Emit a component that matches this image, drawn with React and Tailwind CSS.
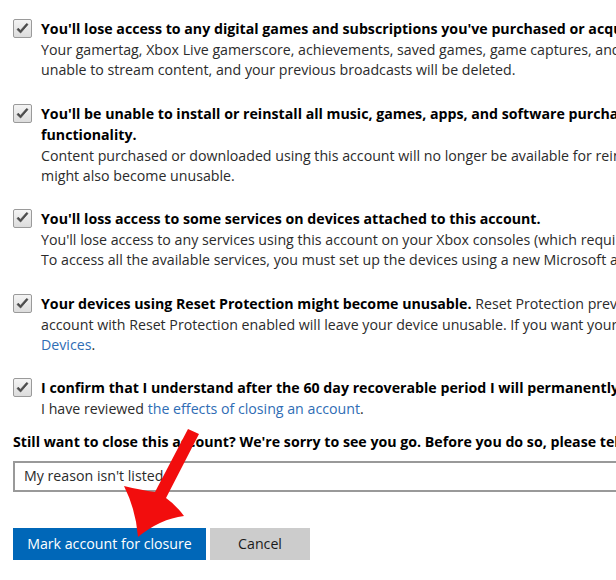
import React from "react";

function Check() {
  return (
    <div className="w-[19px] h-[19px] shrink-0 rounded-[2px] border border-[#9a9a9a] bg-gradient-to-b from-[#f4f4f4] to-[#dcdcdc] flex items-center justify-center">
      <svg width="13" height="12" viewBox="0 0 13 12">
        <path d="M1 6.5 L4.6 10 L12 1.5 L10.6 0.6 L4.5 7.4 L2.3 5.2 Z" fill="#4a4a4a" stroke="#4a4a4a" strokeWidth="0.8" strokeLinejoin="round" />
      </svg>
    </div>
  );
}

function Item({ children, className = "" }) {
  return (
    <div className={"flex gap-[9px] " + className}>
      <Check />
      <div className="flex-1 min-w-0">{children}</div>
    </div>
  );
}

const H = ({ children }) => (
  <div className="whitespace-nowrap font-bold text-black">{children}</div>
);
const L = ({ children }) => (
  <div className="whitespace-nowrap text-[#2b2b2b]">{children}</div>
);
const A = ({ children }) => <span className="text-[#2f6db5]">{children}</span>;

export default function App() {
  return (
    <div
      className="relative w-[616px] h-[580px] overflow-hidden bg-white text-[14.2px] leading-[20.7px]"
      style={{ fontFamily: '"Open Sans", "Noto Sans", sans-serif' }}
    >
      <div className="pl-[13px] pt-[19px] flex flex-col">
        <Item>
          <H>You'll lose access to any digital games and subscriptions you've purchased or acquired.</H>
          <L>Your gamertag, Xbox Live gamerscore, achievements, saved games, game captures, and friends will be deleted. You'll be</L>
          <L>unable to stream content, and your previous broadcasts will be deleted.</L>
        </Item>
        <Item className="mt-[23px]">
          <H>You'll be unable to install or reinstall all music, games, apps, and software purchased with this account and they might lose</H>
          <H>functionality.</H>
          <L>Content purchased or downloaded using this account will no longer be available for reinstallation. Software or apps</L>
          <L>might also become unusable.</L>
        </Item>
        <Item className="mt-[22px]">
          <H>You'll loss access to some services on devices attached to this account.</H>
          <L>You'll lose access to any services using this account on your Xbox consoles (which require a Microsoft account).</L>
          <L>To access all the available services, you must set up the devices using a new Microsoft account.</L>
        </Item>
        <Item className="mt-[23px]">
          <div className="whitespace-nowrap text-[#2b2b2b]">
            <span className="font-bold text-black">Your devices using Reset Protection might become unusable.</span> Reset Protection prevents others from using your device.
          </div>
          <L>account with Reset Protection enabled will leave your device unusable. If you want your device to be usable, turn off</L>
          <L>
            <A>Devices</A>.
          </L>
        </Item>
        <Item className="mt-[22px]">
          <H>I confirm that I understand after the 60 day recoverable period I will permanently lose access to this account.</H>
          <L>
            I have reviewed <A>the effects of closing an account</A>.
          </L>
        </Item>
        <div className="mt-[12px] whitespace-nowrap font-bold text-black">
          Still want to close this account? We're sorry to see you go. Before you do so, please tell us why you're leaving.
        </div>
        <div className="mt-[9px] w-[700px] h-[31px] border-2 border-[#999999] flex items-center pl-[9px] text-[#2b2b2b]">
          My reason isn't listed
        </div>
        <div className="mt-[36px] flex gap-[4px]">
          <div className="w-[193px] h-[32px] bg-[#0067b8] text-white flex items-center justify-center">
            Mark account for closure
          </div>
          <div className="w-[100px] h-[32px] bg-[#cccccc] text-[#1a1a1a] flex items-center justify-center">
            Cancel
          </div>
        </div>
      </div>
      <svg className="absolute left-0 top-0 pointer-events-none" width="616" height="580" viewBox="0 0 616 580">
        <path
          d="M188 429 L199 434 L166 498 Q176 505 184 516 Q160 519 138 537 Q136 510 124 486 Q141 490 155 492 Z"
          fill="#f20d0d"
        />
      </svg>
    </div>
  );
}
